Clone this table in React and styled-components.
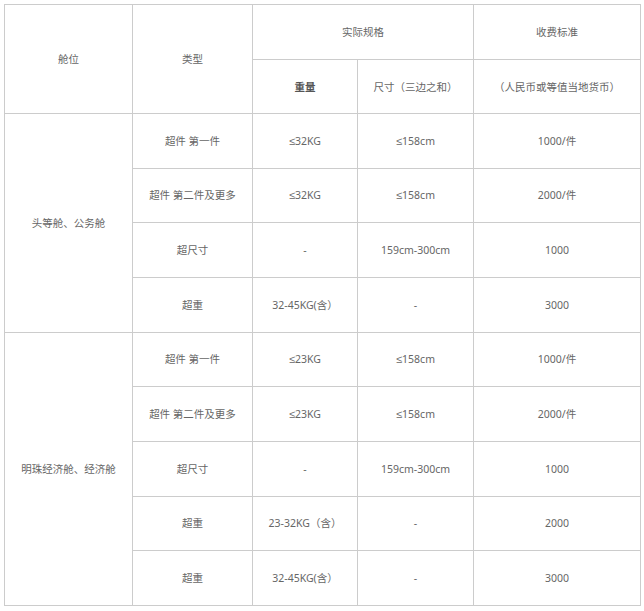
import React from "react";
import styled, { createGlobalStyle } from "styled-components";

const Global = createGlobalStyle`
  html, body { margin: 0; padding: 0; background: #fff; }
  body { font-family: "Noto Sans", "Noto Sans CJK SC", sans-serif; }
`;

const Wrap = styled.div`
  padding: 4px;
`;

const Table = styled.table`
  border-collapse: collapse;
  width: 636px;
  table-layout: fixed;
  font-size: 10.5px;
  color: #666;
`;

const Row = styled.tr`
  height: ${(p) => p.$h}px;
`;

const Cell = styled.td`
  border: 1px solid #ccc;
  text-align: center;
  vertical-align: middle;
  padding: 0;
  font-weight: ${(p) => (p.$bold ? 700 : 400)};
  color: ${(p) => (p.$bold ? "#555" : "#666")};
  line-height: 18px;
`;

const Sym = styled.span`
  font-family: "Liberation Sans", "DejaVu Sans", sans-serif;
  font-size: 11px;
`;

const Text = ({ children }) => {
  const s = String(children);
  if (!s.startsWith("≤")) return s;
  return (
    <>
      <Sym>≤</Sym>
      {s.slice(1)}
    </>
  );
};

const cols = [128, 120, 105, 116, 167];

const groups = [
  {
    name: "头等舱、公务舱",
    rows: [
      ["超件 第一件", "≤32KG", "≤158cm", "1000/件"],
      ["超件 第二件及更多", "≤32KG", "≤158cm", "2000/件"],
      ["超尺寸", "-", "159cm-300cm", "1000"],
      ["超重", "32-45KG(含）", "-", "3000"],
    ],
  },
  {
    name: "明珠经济舱、经济舱",
    rows: [
      ["超件 第一件", "≤23KG", "≤158cm", "1000/件"],
      ["超件 第二件及更多", "≤23KG", "≤158cm", "2000/件"],
      ["超尺寸", "-", "159cm-300cm", "1000"],
      ["超重", "23-32KG（含）", "-", "2000"],
      ["超重", "32-45KG(含）", "-", "3000"],
    ],
  },
];

export default function App() {
  return (
    <Wrap>
      <Global />
      <Table>
        <colgroup>
          {cols.map((w, i) => (
            <col key={i} style={{ width: w }} />
          ))}
        </colgroup>
        <tbody>
          <Row $h={55}>
            <Cell rowSpan={2}>舱位</Cell>
            <Cell rowSpan={2}>类型</Cell>
            <Cell colSpan={2}>实际规格</Cell>
            <Cell>收费标准</Cell>
          </Row>
          <Row $h={54}>
            <Cell $bold>重量</Cell>
            <Cell>尺寸（三边之和）</Cell>
            <Cell>（人民币或等值当地货币）</Cell>
          </Row>
          {groups.map((g) =>
            g.rows.map((r, i) => (
              <Row $h={54.67} key={g.name + i}>
                {i === 0 && <Cell rowSpan={g.rows.length}>{g.name}</Cell>}
                {r.map((c, j) => (
                  <Cell key={j}>
                    <Text>{c}</Text>
                  </Cell>
                ))}
              </Row>
            ))
          )}
        </tbody>
      </Table>
    </Wrap>
  );
}
